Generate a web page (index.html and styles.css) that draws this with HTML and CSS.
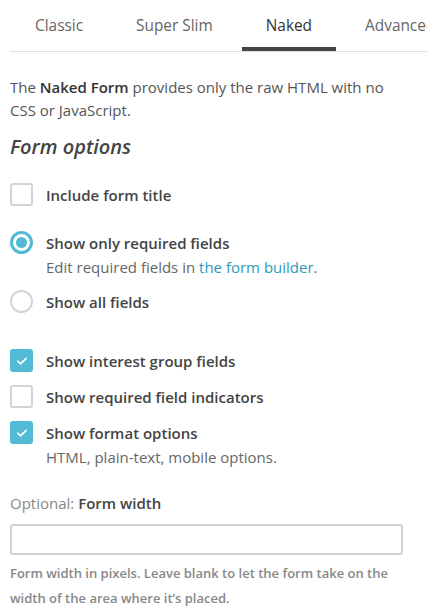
FILE: index.html
```html
<!DOCTYPE html>
<html>
<head>
<meta charset="utf-8">
<link rel="stylesheet" href="styles.css">
</head>
<body>
<nav class="tabs">
  <div class="tab">Classic</div>
  <div class="tab">Super Slim</div>
  <div class="tab active">Naked</div>
  <div class="tab">Advanced</div>
</nav>
<p class="intro">The <b>Naked Form</b> provides only the raw HTML with no CSS or JavaScript.</p>
<h2 class="heading">Form options</h2>

<div class="option first">
  <span class="box"></span>
  <span class="label">Include form title</span>
</div>

<div class="option radio-1">
  <span class="radio on"></span>
  <span class="label">Show only required fields</span>
</div>
<div class="hint">Edit required fields in <a href="#">the form builder</a>.</div>

<div class="option radio-2">
  <span class="radio"></span>
  <span class="label">Show all fields</span>
</div>

<div class="option group-start">
  <span class="box checked"><svg viewBox="0 0 24 24" width="14" height="14"><path d="M5 12.5l4.5 4.5L19 7.5" fill="none" stroke="#fff" stroke-width="3" stroke-linecap="round" stroke-linejoin="round"/></svg></span>
  <span class="label">Show interest group fields</span>
</div>
<div class="option tight">
  <span class="box"></span>
  <span class="label">Show required field indicators</span>
</div>
<div class="option tight">
  <span class="box checked"><svg viewBox="0 0 24 24" width="14" height="14"><path d="M5 12.5l4.5 4.5L19 7.5" fill="none" stroke="#fff" stroke-width="3" stroke-linecap="round" stroke-linejoin="round"/></svg></span>
  <span class="label">Show format options</span>
</div>
<div class="hint">HTML, plain-text, mobile options.</div>

<div class="field-label"><span class="opt">Optional:</span> Form width</div>
<input class="text-input" type="text">
<p class="help">Form width in pixels. Leave blank to let the form take on the width of the area where it’s placed.</p>
</body>
</html>
```

FILE: styles.css
```css
html, body {
  margin: 0;
  padding: 0;
  background: #fff;
  overflow: hidden;
}
body {
  padding: 0 10px;
  font-family: "Open Sans", "Noto Sans", sans-serif;
  color: #555;
  font-size: 15px;
}
.tabs {
  display: flex;
  gap: 5px;
  border-bottom: 1px solid #e0e0e0;
  margin-right: -10px;
  white-space: nowrap;
  overflow: hidden;
}
.tab {
  flex: none;
  padding: 15px 24px 10px;
  line-height: 22px;
  font-size: 15.4px;
  color: #666;
  border-bottom: 4px solid transparent;
}
.tab:first-child {
  padding-left: 25px;
}
.tab.active {
  color: #333;
  border-bottom-color: #444;
}
.intro {
  margin: 24px 0 0;
  max-width: 398px;
  line-height: 23px;
  color: #555;
}
.intro b {
  font-weight: 600;
  color: #333;
}
.heading {
  margin: 10px 0 0;
  font-size: 20px;
  line-height: 30px;
  font-style: italic;
  font-weight: 600;
  color: #444;
}
.option {
  display: flex;
  align-items: center;
  gap: 13px;
  height: 23px;
}
.option.first { margin-top: 21px; }
.option.radio-1 { margin-top: 25px; }
.option.radio-2 { margin-top: 12px; }
.option.group-start { margin-top: 36px; }
.option.tight { margin-top: 13px; }
.label {
  font-weight: 600;
  color: #444;
  line-height: 22px;
}
.box {
  flex: none;
  width: 23px;
  height: 23px;
  box-sizing: border-box;
  border: 2px solid #d4d4d4;
  border-radius: 3px;
  display: flex;
  align-items: center;
  justify-content: center;
}
.box.checked {
  background: #52bad5;
  border-color: #52bad5;
}
.radio {
  flex: none;
  width: 23px;
  height: 23px;
  box-sizing: border-box;
  border: 2px solid #d4d4d4;
  border-radius: 50%;
  display: flex;
  align-items: center;
  justify-content: center;
}
.radio.on {
  border: 3px solid #52bad5;
}
.radio.on::after {
  content: "";
  width: 11px;
  height: 11px;
  border-radius: 50%;
  background: #52bad5;
}
.hint {
  padding-left: 36px;
  margin-top: 2px;
  line-height: 22px;
  color: #666;
}
.hint a {
  color: #2c9ab7;
  text-decoration: none;
}
.field-label {
  margin-top: 24px;
  line-height: 22px;
  color: #444;
  font-weight: 600;
}
.field-label .opt {
  font-weight: 400;
  color: #888;
}
.text-input {
  display: block;
  margin: 10px 0 0;
  width: 393px;
  height: 31px;
  box-sizing: border-box;
  border: 2px solid #d0d0d0;
  border-radius: 3px;
  padding: 0 8px;
  font-family: inherit;
  font-size: 15px;
}
.help {
  margin: 6px 0 0;
  font-size: 13px;
  line-height: 25px;
  font-weight: 600;
  color: #888;
}
```
